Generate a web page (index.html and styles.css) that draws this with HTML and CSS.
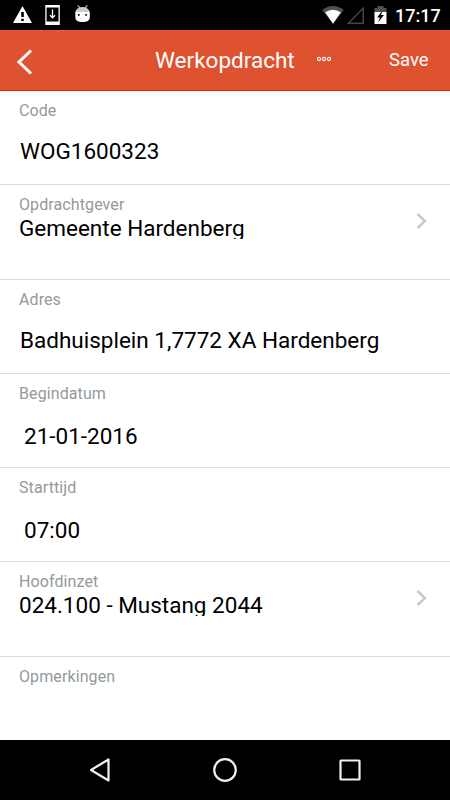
FILE: index.html
```html
<!DOCTYPE html>
<html lang="nl">

<head>
    <meta charset="utf-8">
    <meta name="viewport" content="width=device-width, initial-scale=1.0">
    <title>Werkopdracht</title>
    <link rel="stylesheet" href="styles.css">
</head>

<body>
    <div class="statusbar">
        <svg class="status-left" width="92" height="30" viewBox="0 0 92 30" aria-hidden="true">
            <path fill="#fff" fill-rule="evenodd" d="M22.500 6L32 23H13zM21.200 12v5h2.600v-5zM21.200 18.700v2.300h2.600v-2.300z" />
            <path fill="#fff" fill-rule="evenodd" d="M45.300 5h14.500v20H45.300zM46.600 7.500v14h11.900v-14z" />
            <path fill="none" stroke="#fff" stroke-width="1.300" d="M52.500 9.500v8M50 15.200l2.500 2.700 2.500-2.700" />
            <path fill="#ccc" d="M75.300 12c.2-2 1.800-3.500 3.700-4.300L77.300 5.400l.7-.5 2.200 2.300q2.300-.5 4.600 0l2.200-2.300.7.500L86 7.700c1.900.8 3.500 2.300 3.700 4.300z" />
            <path fill="#fff" fill-rule="evenodd" d="M75.300 12h14.500v5c0 4-3 5-7.200 5s-7.300-1-7.300-5zM78 14v1.700h1.600V14zM85.300 14v1.700h1.600V14z" />
        </svg>
        <div class="status-right">
            <svg width="68" height="30" viewBox="322 0 68 30" aria-hidden="true">
                <path fill="#505050" d="M322.200 10Q333 1.800 343.800 10L333 23.700z" />
                <path fill="#fff" d="M325.200 12.300Q333 7.300 340.800 12.300L333 23.700z" />
                <path fill="none" stroke="#444" stroke-width="1.500" d="M348.500 23.300h14.700V8z" />
                <path fill="#505050" d="M374.500 8h3V6h6v2h3v4h-12z" />
                <path fill="#fff" d="M374.500 12h12v12h-12z" />
                <path fill="#000" d="M382.500 10.500l-5.500 7h3l-2 5 6-7.500h-3z" />
            </svg>
            <span class="clock">17:17</span>
        </div>
    </div>

    <div class="header">
        <button class="back" aria-label="Terug">
            <svg width="18" height="28" viewBox="0 0 18 28" aria-hidden="true">
                <path fill="none" stroke="#fff" stroke-width="3" d="M15 2.500L3 14l12 11.500" />
            </svg>
        </button>
        <h1>Werkopdracht</h1>
        <button class="more" aria-label="Meer">
            <svg width="16" height="6" viewBox="0 0 16 6" aria-hidden="true">
                <g fill="none" stroke="#fff" stroke-width="1.100">
                    <circle cx="3" cy="3" r="1.600" />
                    <circle cx="8" cy="3" r="1.600" />
                    <circle cx="13" cy="3" r="1.600" />
                </g>
            </svg>
        </button>
        <button class="save">Save</button>
    </div>

    <div class="form">
        <div class="field">
            <div class="label">Code</div>
            <div class="value">WOG1600323</div>
        </div>
        <div class="field select tall">
            <div class="label">Opdrachtgever</div>
            <div class="value">Gemeente Hardenberg</div>
            <svg class="arrow" width="12" height="18" viewBox="0 0 12 18" aria-hidden="true">
                <path d="M1.500 2l7.500 7-7.500 7" />
            </svg>
        </div>
        <div class="field">
            <div class="label">Adres</div>
            <div class="value">Badhuisplein 1,7772 XA Hardenberg</div>
        </div>
        <div class="field date">
            <div class="label">Begindatum</div>
            <div class="value">21-01-2016</div>
        </div>
        <div class="field date">
            <div class="label">Starttijd</div>
            <div class="value">07:00</div>
        </div>
        <div class="field select tall">
            <div class="label">Hoofdinzet</div>
            <div class="value">024.100 - Mustang 2044</div>
            <svg class="arrow" width="12" height="18" viewBox="0 0 12 18" aria-hidden="true">
                <path d="M1.500 2l7.500 7-7.500 7" />
            </svg>
        </div>
        <div class="field last">
            <div class="label">Opmerkingen</div>
        </div>
    </div>

    <div class="navbar">
        <svg width="26" height="30" viewBox="0 0 26 30" aria-hidden="true">
            <path d="M21.500 4.500v21L4 15z" />
        </svg>
        <svg width="26" height="30" viewBox="0 0 26 30" aria-hidden="true">
            <circle cx="13" cy="15" r="10.800" />
        </svg>
        <svg width="26" height="30" viewBox="0 0 26 30" aria-hidden="true">
            <rect x="3.500" y="5.500" width="19" height="19" rx="0.500" />
        </svg>
    </div>
</body>

</html>
```

FILE: styles.css
```css
* {
    box-sizing: border-box;
}

body {
    margin: 0;
    width: 450px;
    height: 800px;
    display: flex;
    flex-direction: column;
    overflow: hidden;
    background-color: white;
    font-family: Roboto, "Liberation Sans", sans-serif;
}

button {
    padding: 0;
    border: 0;
    background: none;
    color: white;
    font-family: inherit;
}

svg {
    display: block;
}

.statusbar {
    display: flex;
    justify-content: space-between;
    height: 30px;
    background-color: black;
}

.status-right {
    display: flex;
    width: 128px;
}

.clock {
    margin-left: 5px;
    color: white;
    font-size: 18px;
    font-weight: 500;
    line-height: 31px;
}

.header {
    display: grid;
    grid-template-columns: 155px 160px 60px 1fr;
    align-items: center;
    height: 61px;
    border-top: 1px solid #ea5a36;
    border-bottom: 1px solid #dc2c08;
    background-color: #de5230;
    color: white;
}

.header h1 {
    margin: 0;
    padding-bottom: 1px;
    font-size: 22.5px;
    font-weight: 400;
    line-height: 30px;
}

.back {
    padding: 3px 0 0 16px;
}

.more {
    padding: 0 0 3px 1px;
}

.save {
    padding: 0 0 1px 14px;
    text-align: left;
    font-size: 18.5px;
    line-height: 30px;
}

.form {
    flex: 1;
}

.field {
    height: 94px;
    padding: 10px 19px 0;
    border-bottom: 1px solid #dcdfdf;
}

.tall {
    height: 95px;
}

.last {
    height: auto;
    border-bottom: 0;
}

.label {
    height: 20px;
    color: #94999b;
    font-size: 16px;
    letter-spacing: 0.1px;
    line-height: 20px;
}

.value {
    margin-top: 15px;
    padding-left: 1px;
    color: black;
    font-size: 22.5px;
    line-height: 30px;
    white-space: nowrap;
}

.date .value {
    margin-top: 17px;
    padding-left: 5px;
}

.select {
    display: grid;
    grid-template-columns: 1fr 15px;
    grid-template-rows: 20px 24px;
}

.select .label {
    grid-column: 1 / 3;
}

/* the picker clips its text, so descenders are cut off */
.select .value {
    height: 24px;
    margin-top: 0;
    padding-left: 0;
    line-height: 26px;
    overflow: hidden;
}

.arrow {
    margin-top: -3px;
    fill: none;
    stroke: #c7c9cb;
    stroke-width: 2.5;
}

.navbar {
    display: flex;
    align-items: center;
    justify-content: space-between;
    height: 60px;
    padding: 0 87px;
    background-color: black;
}

.navbar svg {
    fill: none;
    stroke: #f0f0f0;
    stroke-width: 2.2;
    stroke-linejoin: round;
}
```
